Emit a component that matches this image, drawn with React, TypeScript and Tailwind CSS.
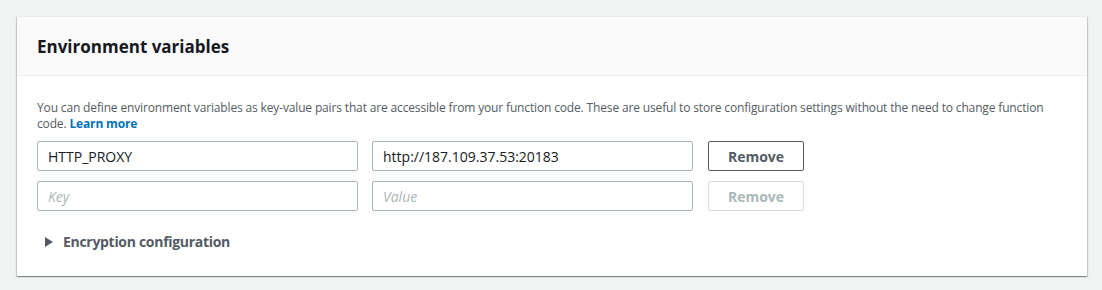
import React from "react";

export default function App() {
  const font = { fontFamily: '"Open Sans", "Liberation Sans", sans-serif' };
  return (
    <div className="w-[1102px] h-[290px] bg-[#f2f3f3] pt-[16px] pl-[17px]" style={font}>
      <div className="w-[1070px] bg-white border-t border-[#eaeded] shadow-[0_1px_1px_0_rgba(0,28,36,0.3),1px_1px_1px_0_rgba(0,28,36,0.15),-1px_1px_1px_0_rgba(0,28,36,0.15)]">
        <div className="h-[59px] bg-[#fafafa] border-b border-[#eaeded] px-[20px] flex items-center">
          <h2 className="text-[17px] font-bold text-[#16191f] leading-none">Environment variables</h2>
        </div>
        <div className="px-[20px] pt-[24px] pb-[24px]">
          <p className="max-w-[1012px] text-[12px] leading-[16px] text-[#545b64] tracking-[-0.15px]">
            You can define environment variables as key-value pairs that are accessible from your function code. These are useful to store configuration settings without the need to change function code.{" "}
            <a className="text-[#0073bb] font-bold">Learn more</a>
          </p>
          <div className="mt-[9px] flex flex-col gap-[10px]">
            <div className="flex gap-[14px] items-center">
              <div className="w-[321px] h-[30px] border border-[#aab7b8] rounded-[2px] px-[10px] flex items-center text-[14px] text-[#16191f]">HTTP_PROXY</div>
              <div className="w-[321px] h-[30px] border border-[#aab7b8] rounded-[2px] px-[10px] flex items-center text-[14px] text-[#16191f]">http://187.109.37.53:20183</div>
              <button className="ml-[1px] w-[96px] h-[30px] border border-[#545b64] rounded-[2px] text-[14px] font-bold text-[#545b64] bg-white">Remove</button>
            </div>
            <div className="flex gap-[14px] items-center">
              <div className="w-[321px] h-[30px] border border-[#aab7b8] rounded-[2px] px-[10px] flex items-center text-[14px] italic text-[#aab7b8]">Key</div>
              <div className="w-[321px] h-[30px] border border-[#aab7b8] rounded-[2px] px-[10px] flex items-center text-[14px] italic text-[#aab7b8]">Value</div>
              <button className="ml-[1px] w-[96px] h-[30px] border border-[#d5dbdb] rounded-[2px] text-[14px] font-bold text-[#aab7b8] bg-white">Remove</button>
            </div>
          </div>
          <div className="mt-[20px] flex items-center gap-[10px] pl-[8px]">
            <svg width="8" height="10" viewBox="0 0 8 10"><path d="M0 0 L8 5 L0 10 Z" fill="#545b64" /></svg>
            <span className="text-[14px] font-bold text-[#545b64] tracking-[-0.3px]">Encryption configuration</span>
          </div>
        </div>
      </div>
    </div>
  );
}
